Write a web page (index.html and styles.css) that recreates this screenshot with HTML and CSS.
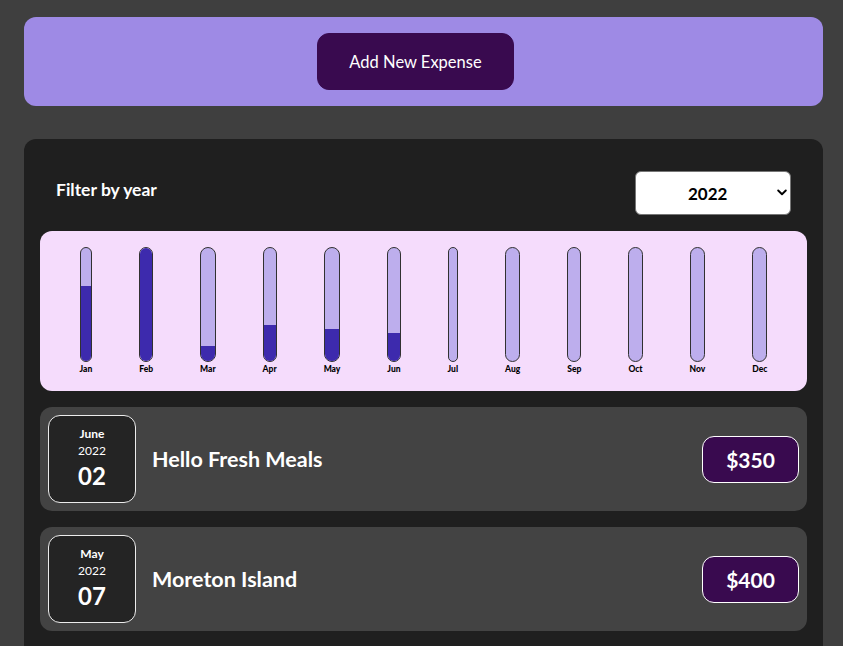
FILE: index.html
```html
<!DOCTYPE html>
<html lang="en">
<head>
<meta charset="utf-8">
<title>Expenses</title>
<link rel="stylesheet" href="styles.css">
</head>
<body>
<div class="new-expense">
  <button class="btn-add" type="button">Add New Expense</button>
</div>

<div class="expenses">
  <div class="filter">
    <label class="filter-label" for="year">Filter by year</label>
    <div class="select-wrap">
      <select id="year" class="filter-select">
        <option>2022</option>
        <option>2021</option>
        <option>2020</option>
      </select>
      <svg class="select-arrow" width="10" height="7" viewBox="0 0 10 7"><path d="M1.2 1.5 L5 5.2 L8.8 1.5" fill="none" stroke="#000" stroke-width="1.9" stroke-linecap="round" stroke-linejoin="round"/></svg>
    </div>
  </div>

  <div class="chart">
    <div class="bar"><div class="bar-inner"><div class="bar-fill" style="height:66%"></div></div><div class="bar-label">Jan</div></div>
    <div class="bar"><div class="bar-inner"><div class="bar-fill" style="height:100%"></div></div><div class="bar-label">Feb</div></div>
    <div class="bar"><div class="bar-inner"><div class="bar-fill" style="height:13%"></div></div><div class="bar-label">Mar</div></div>
    <div class="bar"><div class="bar-inner"><div class="bar-fill" style="height:32%"></div></div><div class="bar-label">Apr</div></div>
    <div class="bar"><div class="bar-inner"><div class="bar-fill" style="height:28%"></div></div><div class="bar-label">May</div></div>
    <div class="bar"><div class="bar-inner"><div class="bar-fill" style="height:25%"></div></div><div class="bar-label">Jun</div></div>
    <div class="bar"><div class="bar-inner"><div class="bar-fill" style="height:0%"></div></div><div class="bar-label">Jul</div></div>
    <div class="bar"><div class="bar-inner"><div class="bar-fill" style="height:0%"></div></div><div class="bar-label">Aug</div></div>
    <div class="bar"><div class="bar-inner"><div class="bar-fill" style="height:0%"></div></div><div class="bar-label">Sep</div></div>
    <div class="bar"><div class="bar-inner"><div class="bar-fill" style="height:0%"></div></div><div class="bar-label">Oct</div></div>
    <div class="bar"><div class="bar-inner"><div class="bar-fill" style="height:0%"></div></div><div class="bar-label">Nov</div></div>
    <div class="bar"><div class="bar-inner"><div class="bar-fill" style="height:0%"></div></div><div class="bar-label">Dec</div></div>
  </div>

  <ul class="list">
    <li class="item">
      <div class="date">
        <div class="date-month">June</div>
        <div class="date-year">2022</div>
        <div class="date-day">02</div>
      </div>
      <h2 class="item-title">Hello Fresh Meals</h2>
      <div class="price">$350</div>
    </li>
    <li class="item">
      <div class="date">
        <div class="date-month">May</div>
        <div class="date-year">2022</div>
        <div class="date-day">07</div>
      </div>
      <h2 class="item-title">Moreton Island</h2>
      <div class="price">$400</div>
    </li>
  </ul>
</div>
</body>
</html>
```

FILE: styles.css
```css
* { box-sizing: border-box; }

html, body {
  margin: 0;
  padding: 0;
}

body {
  background: #3f3f3f;
  font-family: "Lato", "Noto Sans", sans-serif;
  color: #fff;
  overflow: hidden;
  padding-left: 4px;
}

.new-expense {
  width: 799px;
  margin: 17px auto 0;
  padding: 16px;
  background: #9e8ae5;
  border-radius: 12px;
  display: flex;
  justify-content: center;
}

.btn-add {
  font-family: inherit;
  font-size: 16.5px;
  height: 57px;
  width: 197px;
  padding: 0;
  margin-right: 16px;
  border: 1px solid #390a4f;
  background: #390a4f;
  color: #fff;
  border-radius: 12px;
  cursor: pointer;
}

.expenses {
  width: 799px;
  margin: 33px auto 0;
  padding: 16px;
  background: #1f1f1f;
  border-radius: 12px;
  min-height: 600px;
}

.filter {
  display: flex;
  align-items: center;
  justify-content: space-between;
  padding: 0 16px;
  margin: 16px 0;
}

.filter-label {
  font-weight: bold;
  font-size: 17.5px;
  margin-top: -7px;
}

.select-wrap {
  position: relative;
}

.filter-select {
  appearance: none;
  -webkit-appearance: none;
  font-family: inherit;
  font-size: 17px;
  font-weight: bold;
  color: #000;
  background: #fff;
  width: 156px;
  height: 44px;
  padding: 0 0 0 52px;
  border: 1px solid #767676;
  border-radius: 6px;
  display: block;
}

.select-arrow {
  position: absolute;
  right: 4px;
  top: 18px;
  pointer-events: none;
}

.chart {
  height: 160px;
  padding: 16px;
  background: #f5dcfc;
  border-radius: 12px;
  display: flex;
  justify-content: space-around;
}

.bar {
  height: 100%;
  display: flex;
  flex-direction: column;
  align-items: center;
}

.bar-inner {
  flex: 1;
  width: 100%;
  border: 1px solid #313131;
  border-radius: 12px;
  background: #bdaeed;
  display: flex;
  flex-direction: column;
  justify-content: flex-end;
  overflow: hidden;
}

.bar-fill {
  width: 100%;
  background: #3d2aad;
}

.bar-label {
  font-size: 8.5px;
  font-weight: 900;
  color: #000;
  line-height: 12px;
  padding-top: 1px;
}

.list {
  list-style: none;
  margin: 0;
  padding: 0;
}

.item {
  display: flex;
  align-items: center;
  margin: 16px 0;
  padding: 8px;
  background: #434343;
  border-radius: 12px;
}

.date {
  width: 88px;
  height: 88px;
  flex: none;
  display: flex;
  flex-direction: column;
  align-items: center;
  justify-content: center;
  border: 1px solid #ececec;
  background: #242424;
  border-radius: 12px;
  color: #fff;
}

.date-month {
  font-size: 12px;
  font-weight: bold;
  line-height: 16px;
}

.date-year {
  font-size: 12px;
  line-height: 17px;
}

.date-day {
  font-size: 24px;
  font-weight: bold;
  line-height: 32px;
  margin-top: 1px;
}

.item-title {
  flex: 1;
  margin: 0 16px;
  font-size: 21.5px;
  font-weight: bold;
  color: #fff;
}

.price {
  font-size: 21px;
  font-weight: bold;
  color: #fff;
  background: #390a4f;
  border: 1px solid #fff;
  border-radius: 12px;
  height: 47px;
  width: 97px;
  display: flex;
  align-items: center;
  justify-content: center;
}
```
